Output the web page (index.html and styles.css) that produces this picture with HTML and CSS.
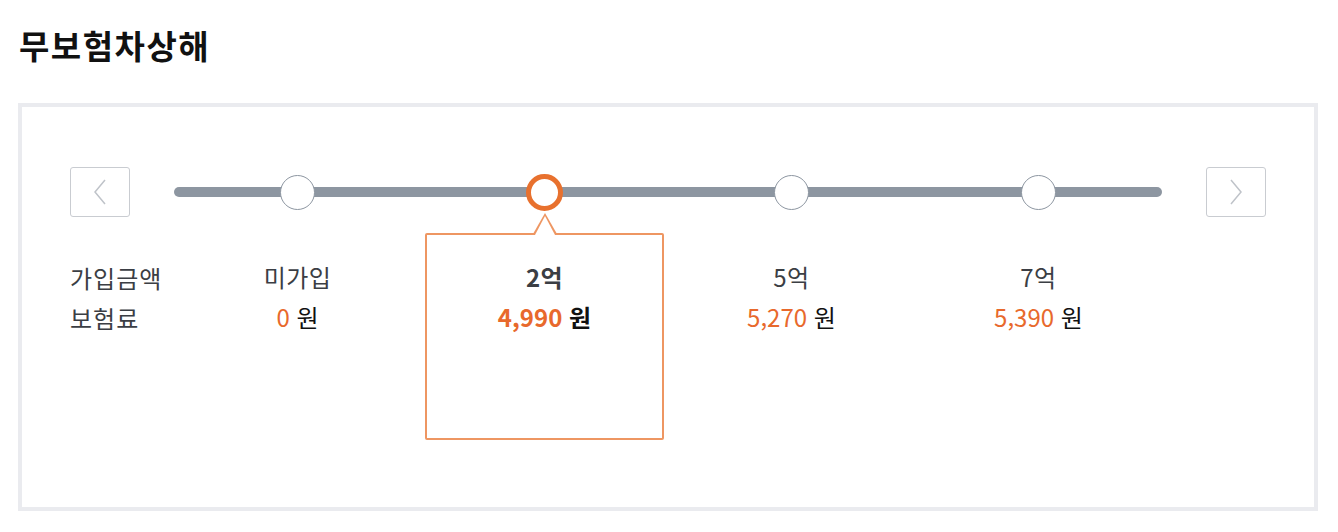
FILE: index.html
```html
<!DOCTYPE html>
<html lang="ko">
<head>
    <meta charset="UTF-8">
    <meta name="viewport" content="width=device-width, initial-scale=1.0">
    <title>무보험차상해</title>
    <link rel="stylesheet" href="styles.css">
</head>
<body>
    <h2 class="title">무보험차상해</h2>

    <!-- Coverage amount selector -->
    <div class="panel">
        <div class="slider-row">
            <button class="nav-btn" aria-label="이전">
                <svg width="14" height="26" viewBox="0 0 14 26"><path d="M12 1 L2 13 L12 25" fill="none" stroke="#bfc3c9" stroke-width="1.5"/></svg>
            </button>
            <div class="track">
                <span class="knob"></span>
                <span class="knob active"></span>
                <span class="knob"></span>
                <span class="knob"></span>
            </div>
            <button class="nav-btn" aria-label="다음">
                <svg width="14" height="26" viewBox="0 0 14 26"><path d="M2 1 L12 13 L2 25" fill="none" stroke="#bfc3c9" stroke-width="1.5"/></svg>
            </button>
        </div>

        <div class="info-row">
            <div class="labels">
                <p>가입금액</p>
                <p>보험료</p>
            </div>
            <div class="option">
                <p>미가입</p>
                <p><span class="price">0</span> 원</p>
            </div>
            <div class="option selected">
                <p>2억</p>
                <p><span class="price">4,990</span> 원</p>
            </div>
            <div class="option">
                <p>5억</p>
                <p><span class="price">5,270</span> 원</p>
            </div>
            <div class="option">
                <p>7억</p>
                <p><span class="price">5,390</span> 원</p>
            </div>
        </div>
    </div>
</body>
</html>
```

FILE: styles.css
```css
body {
    font-family: "Noto Sans CJK KR", "Noto Sans", sans-serif;
    margin: 0;
    padding: 0 20px 0 18px;
    background-color: #fff;
    color: #3b3e44;
}
p {
    margin: 0;
}
.title {
    margin: 0;
    padding: 23px 0 0 1px;
    height: 103px;
    box-sizing: border-box;
    font-size: 33px;
    line-height: 44px;
    font-weight: 700;
    color: #111;
    letter-spacing: 1.5px;
}
.panel {
    border: 4px solid #eaebef;
    height: 408px;
    box-sizing: border-box;
    padding: 60px 48px 0;
}
.slider-row {
    display: flex;
    align-items: center;
    gap: 44px;
}
.nav-btn {
    width: 60px;
    height: 50px;
    padding: 0;
    border: 1.5px solid #c9ccd1;
    border-radius: 3px;
    background: #fff;
    display: flex;
    align-items: center;
    justify-content: center;
    cursor: pointer;
}
.track {
    flex: 1;
    height: 10px;
    border-radius: 5px;
    background-color: #8d96a1;
    display: grid;
    grid-template-columns: repeat(4, 1fr);
    align-items: center;
    justify-items: center;
}
.knob {
    width: 35px;
    height: 35px;
    margin: -13px 0;
    box-sizing: border-box;
    border: 1.5px solid #8d96a1;
    border-radius: 50%;
    background: #fff;
}
.knob.active {
    width: 37px;
    height: 37px;
    margin: -14px 0;
    border: 5px solid #e8712e;
}
/* Labels and prices */
.info-row {
    display: grid;
    grid-template-columns: 104px repeat(4, 1fr) 104px;
    margin-top: 16px;
    font-size: 24px;
    line-height: 40px;
}
.labels {
    padding-top: 25px;
    color: #3b3e44;
    letter-spacing: 1px;
    white-space: nowrap;
}
.option {
    position: relative;
    margin: 0 4px;
    height: 207px;
    box-sizing: border-box;
    border: 2px solid transparent;
    border-radius: 2px;
    padding-top: 22px;
    text-align: center;
}
.option p:first-child {
    letter-spacing: 0.5px;
}
.option p + p {
    color: #111;
}
.price {
    color: #e8692c;
}
.selected {
    border-color: #ee9662;
    font-weight: 700;
}
.selected::before,
.selected::after {
    content: "";
    position: absolute;
    left: 50%;
    width: 0;
    height: 0;
    border-style: solid;
    transform: translateX(-50%);
}
.selected::before {
    top: -22px;
    border-width: 0 12px 21px;
    border-color: transparent transparent #ee9662;
}
.selected::after {
    top: -19px;
    border-width: 0 10px 19px;
    border-color: transparent transparent #fff;
}
```
